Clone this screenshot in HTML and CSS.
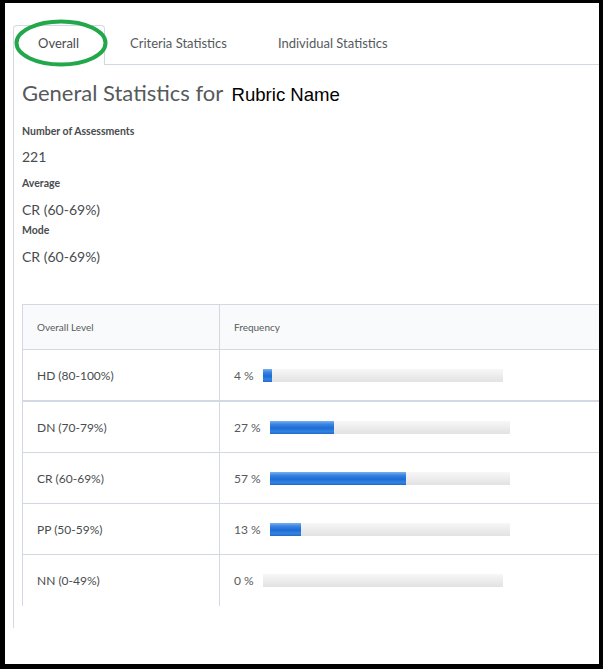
FILE: index.html
```html
<!DOCTYPE html>
<html lang="en">
<head>
<meta charset="utf-8">
<title>General Statistics</title>
<link rel="stylesheet" href="styles.css">
</head>
<body>
<div class="frame">
  <svg class="highlight" width="100" height="52" viewBox="0 0 100 52" aria-hidden="true">
    <ellipse cx="47" cy="25" rx="44.5" ry="21.5" fill="none" stroke="#22a84a" stroke-width="4"/>
  </svg>
  <div class="tabs">
    <div class="tab active">Overall</div>
    <div class="tab">Criteria Statistics</div>
    <div class="tab">Individual Statistics</div>
  </div>
  <div class="panel">
    <h1 class="title">General Statistics for <span class="rubric">Rubric Name</span></h1>
    <div class="label l1">Number of Assessments</div>
    <div class="value v1">221</div>
    <div class="label l2">Average</div>
    <div class="value v2">CR (60-69%)</div>
    <div class="label l3">Mode</div>
    <div class="value v3">CR (60-69%)</div>

    <div class="stats-table">
      <div class="row head">
        <div class="cell">Overall Level</div>
        <div class="cell">Frequency</div>
      </div>
      <div class="row first">
        <div class="cell">HD (80-100%)</div>
        <div class="cell"><span class="pct">4 %</span><span class="bar"><span class="fill" style="width:4%"></span></span></div>
      </div>
      <div class="row">
        <div class="cell">DN (70-79%)</div>
        <div class="cell"><span class="pct">27 %</span><span class="bar"><span class="fill" style="width:27%"></span></span></div>
      </div>
      <div class="row">
        <div class="cell">CR (60-69%)</div>
        <div class="cell"><span class="pct">57 %</span><span class="bar"><span class="fill" style="width:57%"></span></span></div>
      </div>
      <div class="row">
        <div class="cell">PP (50-59%)</div>
        <div class="cell"><span class="pct">13 %</span><span class="bar"><span class="fill" style="width:13%"></span></span></div>
      </div>
      <div class="row last">
        <div class="cell">NN (0-49%)</div>
        <div class="cell"><span class="pct">0 %</span><span class="bar"><span class="fill" style="width:0%"></span></span></div>
      </div>
    </div>
  </div>
</div>
</body>
</html>
```
FILE: styles.css
```css
html {
  background: #000;
}
body {
  margin: 0;
  font-family: Lato, "Open Sans", sans-serif;
  color: #494c4e;
}
.frame {
  position: relative;
  margin: 3px 4px 0 5px;
  height: 661px;
  background: #fff;
  overflow: hidden;
}
.highlight {
  position: absolute;
  left: 9px;
  top: 15px;
  z-index: 2;
}
.tabs {
  display: flex;
  margin: 22px 0 0 8px;
  border-bottom: 1px solid #d3d9e3;
}
.tab {
  font-size: 13px;
  line-height: 17px;
  padding: 9px 25px 12px 24px;
  border: 1px solid transparent;
  border-bottom: 0;
  color: #565a5c;
  white-space: nowrap;
}
.tab.active {
  color: #494c4e;
  background: #fff;
  border-color: #d3d9e3;
  border-radius: 4px 4px 0 0;
  margin-bottom: -1px;
  padding-bottom: 13px;
}
.panel {
  margin-left: 8px;
  border-left: 1px solid #d3d9e3;
  padding: 13px 0 22px 8px;
}
.title {
  margin: 0;
  font-size: 22px;
  line-height: 29px;
  font-weight: 400;
  color: #565a5c;
  white-space: nowrap;
}
.rubric {
  font-family: "Liberation Sans", Arial, sans-serif;
  font-size: 18.6px;
  color: #000;
  margin-left: 3px;
}
.label {
  font-size: 10.5px;
  line-height: 14px;
  font-weight: 700;
  color: #494c4e;
}
.value {
  font-size: 14px;
  line-height: 18px;
  color: #494c4e;
}
.l1 { margin-top: 15px; }
.v1 { margin-top: 10px; }
.l2 { margin-top: 10px; }
.v2 { margin-top: 11px; }
.l3 { margin-top: 4px; }
.v3 { margin-top: 11px; }

.stats-table {
  margin-top: 38px;
  width: 680px;
  border-top: 1px solid #d3d9e3;
  border-left: 1px solid #d3d9e3;
}
.row {
  display: grid;
  grid-template-columns: 196px 1fr;
  height: 50px;
  border-bottom: 1px solid #d3d9e3;
}
.row.head {
  height: 44px;
  background: #f9fafb;
}
.row.head .cell {
  font-size: 10px;
  color: #565a5c;
}
.row.first {
  border-bottom-width: 2px;
}
.row.last {
  height: 51px;
  border-bottom: 0;
}
.cell {
  display: flex;
  align-items: center;
  padding-left: 14px;
  font-size: 12px;
  color: #494c4e;
  white-space: nowrap;
}
.cell + .cell {
  border-left: 1px solid #d3d9e3;
}
.pct {
  color: #565a5c;
}
.bar {
  display: block;
  width: 240px;
  height: 13px;
  margin-left: 9px;
  background: linear-gradient(#f7f7f7, #e2e2e2);
}
.fill {
  display: block;
  height: 100%;
  background: linear-gradient(#7ab0ee 0%, #3a84e2 25%, #1c6cd6 55%, #3482e0 80%, #1f6bcf 100%);
}
```
